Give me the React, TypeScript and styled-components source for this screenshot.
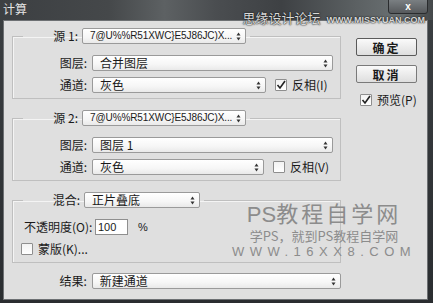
import React from "react";
import styled, { createGlobalStyle } from "styled-components";

const GlobalStyle = createGlobalStyle`
  html, body {
    margin: 0;
    padding: 0;
    background: #1f2124;
  }
  body {
    font-family: "Noto Sans CJK SC", "Liberation Sans", sans-serif;
    font-size: 12px;
    color: #1a1a1a;
  }
`;

const Window = styled.div`
  position: relative;
  width: 433px;
  height: 303px;
  overflow: hidden;
  background: linear-gradient(180deg, #3b3f42 0%, #2a2d30 100%);
  display: flex;
  flex-direction: column;
`;

const TitleBar = styled.div`
  height: 20px;
  flex: none;
  display: flex;
  align-items: flex-start;
  padding-left: 3px;
  background: linear-gradient(
    90deg,
    #3c3f42 0%,
    #45484a 25%,
    #5d6163 38%,
    #4a4d50 50%,
    #3e4144 65%,
    #5b6062 82%,
    #6a7072 92%,
    #44484a 100%
  );
`;

const Title = styled.span`
  color: #e4e4e4;
  font-size: 12px;
  line-height: 16px;
  margin-top: 1px;
`;

const CloseButton = styled.div`
  position: absolute;
  left: 388px;
  top: -1px;
  width: 38px;
  height: 13px;
  border: 1px solid #2a2c2e;
  border-radius: 0 0 3px 3px;
  background: linear-gradient(180deg, #7a7f82, #56595c);
  display: flex;
  align-items: center;
  justify-content: center;
  color: #ffffff;
  font-family: "Liberation Sans", sans-serif;
  font-weight: bold;
  font-size: 10px;
`;

const ForumMark = styled.div`
  position: absolute;
  right: 8px;
  top: 8px;
  display: flex;
  align-items: baseline;
  gap: 6px;
  color: #d8d8d8;
  text-shadow: 0 0 2px #222, 0 0 1px #000;
  white-space: nowrap;
  span:first-child {
    font-size: 13px;
  }
  span:last-child {
    font-family: "Liberation Sans", sans-serif;
    font-size: 9px;
    font-weight: bold;
  }
`;

const Dialog = styled.div`
  margin: 0 5px 0 3px;
  height: 280px;
  box-sizing: border-box;
  border: 1px solid #6d7073;
  background: #dfdfdf;
  display: flex;
  padding: 7px 0 0 8px;
`;

const LeftColumn = styled.div`
  width: 329px;
  display: flex;
  flex-direction: column;
`;

const RightColumn = styled.div`
  margin-left: 15px;
  padding-top: 10px;
  display: flex;
  flex-direction: column;
  align-items: flex-start;
`;

const Group = styled.fieldset<{ $gap?: number }>`
  margin: 0 0 ${(p) => p.$gap ?? 11}px 0;
  padding: 0 0 5px 0;
  min-width: 0;
  border: 1px solid #bfbfbf;
  box-shadow: inset 1px 1px 0 #f4f4f4;
  display: flex;
  flex-direction: column;
  gap: 6px;
`;

const Legend = styled.legend`
  margin-left: 10px;
  padding: 0 4px 0 0;
  display: flex;
  align-items: center;
  gap: 4px;
  margin-bottom: 11px;
`;

const Row = styled.div<{ $indent?: number }>`
  display: flex;
  align-items: center;
  gap: 5px;
  padding-left: ${(p) => p.$indent ?? 0}px;
  height: 16px;
`;

const Label = styled.span<{ $w: number }>`
  width: ${(p) => p.$w}px;
  text-align: right;
  white-space: nowrap;
  line-height: 16px;
`;

const SelectBox = styled.div<{ $w: number }>`
  width: ${(p) => p.$w}px;
  height: 16px;
  box-sizing: border-box;
  border: 1px solid #9a9a9a;
  border-radius: 2px;
  background: linear-gradient(180deg, #ffffff 0%, #f6f6f6 60%, #e9e9e9 100%);
  display: flex;
  align-items: center;
  justify-content: space-between;
  padding: 0 4px 0 7px;
  white-space: nowrap;
`;

const SelectText = styled.span<{ $latin?: boolean }>`
  font-family: ${(p) =>
    p.$latin
      ? `"Liberation Sans", sans-serif`
      : `"Noto Sans CJK SC", sans-serif`};
  font-size: ${(p) => (p.$latin ? 10 : 12)}px;
  letter-spacing: ${(p) => (p.$latin ? "-0.1px" : "0")};
  line-height: 14px;
`;

const Arrows = styled.svg`
  flex: none;
  margin-left: 3px;
`;

const CheckWrap = styled.label<{ $ml?: number }>`
  display: flex;
  align-items: center;
  gap: 5px;
  margin-left: ${(p) => p.$ml ?? 0}px;
  white-space: nowrap;
  line-height: 16px;
`;

const Box = styled.span`
  width: 12px;
  height: 12px;
  box-sizing: border-box;
  border: 1px solid #8e8e8e;
  border-radius: 1px;
  background: linear-gradient(180deg, #f2f2f2, #ffffff);
  display: flex;
  align-items: center;
  justify-content: center;
`;

const Button = styled.div<{ $default?: boolean }>`
  width: 61px;
  height: 18px;
  box-sizing: border-box;
  border: 1px solid ${(p) => (p.$default ? "#5a5a5a" : "#7a7a7a")};
  border-radius: 2px;
  background: linear-gradient(180deg, #fafafa 0%, #ececec 50%, #dedede 100%);
  display: flex;
  align-items: center;
  justify-content: center;
  font-weight: bold;
  letter-spacing: 2px;
  margin-bottom: 9px;
`;

const NumberField = styled.div`
  width: 33px;
  height: 16px;
  box-sizing: border-box;
  border: 1px solid #8f8f8f;
  background: #ffffff;
  font-family: "Liberation Sans", sans-serif;
  font-size: 11px;
  line-height: 14px;
  padding-left: 2px;
`;

const Percent = styled.span`
  margin-left: 5px;
  font-family: "Liberation Sans", sans-serif;
  font-size: 11px;
`;

const SiteMark = styled.div`
  position: absolute;
  left: 244px;
  top: 199px;
  width: 160px;
  display: flex;
  flex-direction: column;
  align-items: center;
  color: #8c8c8c;
  pointer-events: none;
  white-space: nowrap;
`;

const SiteName = styled.div`
  font-size: 22px;
  line-height: 27px;
  letter-spacing: 3px;
  span {
    font-family: "Liberation Sans", sans-serif;
    letter-spacing: 0;
  }
`;

const SiteSlogan = styled.div`
  font-family: "Noto Sans CJK SC", serif;
  font-size: 13px;
  line-height: 16px;
`;

const SiteUrl = styled.div`
  font-family: "Liberation Sans", sans-serif;
  font-size: 13px;
  line-height: 15px;
  letter-spacing: 5.5px;
`;

function UpDown() {
  return (
    <Arrows width="5" height="9" viewBox="0 0 5 9">
      <path d="M2.5 0.5 L4.5 3.5 L0.5 3.5 Z" fill="#333" />
      <path d="M0.5 5.5 L4.5 5.5 L2.5 8.5 Z" fill="#333" />
    </Arrows>
  );
}

function Select({ w, value, latin }: { w: number; value: string; latin?: boolean }) {
  return (
    <SelectBox $w={w}>
      <SelectText $latin={latin}>{value}</SelectText>
      <UpDown />
    </SelectBox>
  );
}

function Check({ checked, label, ml }: { checked?: boolean; label: string; ml?: number }) {
  return (
    <CheckWrap $ml={ml}>
      <Box>
        {checked && (
          <svg width="10" height="10" viewBox="0 0 10 10">
            <path d="M1.5 5 L4 8 L9 1" fill="none" stroke="#222" strokeWidth="1.6" />
          </svg>
        )}
      </Box>
      {label}
    </CheckWrap>
  );
}

const sourceName = "7@U%%R51XWC}E5J86JC)X...";

function App() {
  return (
    <Window>
      <GlobalStyle />
      <TitleBar>
        <Title>计算</Title>
      </TitleBar>
      <CloseButton>x</CloseButton>
      <ForumMark>
        <span>思缘设计论坛</span>
        <span>WWW.MISSYUAN.COM</span>
      </ForumMark>
      <Dialog>
        <LeftColumn>
          <Group>
            <Legend>
              <Label $w={55}>源 1:</Label>
              <Select w={164} value={sourceName} latin />
            </Legend>
            <Row>
              <Label $w={74}>图层:</Label>
              <Select w={241} value="合并图层" />
            </Row>
            <Row>
              <Label $w={74}>通道:</Label>
              <Select w={174} value="灰色" />
              <Check checked label="反相(I)" ml={4} />
            </Row>
          </Group>
          <Group>
            <Legend>
              <Label $w={55}>源 2:</Label>
              <Select w={164} value={sourceName} latin />
            </Legend>
            <Row>
              <Label $w={74}>图层:</Label>
              <Select w={241} value="图层 1" />
            </Row>
            <Row>
              <Label $w={74}>通道:</Label>
              <Select w={172} value="灰色" />
              <Check label="反相(V)" ml={4} />
            </Row>
          </Group>
          <Group $gap={10}>
            <Legend>
              <Label $w={57}>混合:</Label>
              <Select w={116} value="正片叠底" />
            </Legend>
            <Row $indent={11}>
              <Label $w={66}>不透明度(O):</Label>
              <NumberField>100</NumberField>
              <Percent>%</Percent>
            </Row>
            <Row $indent={8}>
              <Check label="蒙版(K)..." />
            </Row>
          </Group>
          <Row>
            <Label $w={75}>结果:</Label>
            <Select w={250} value="新建通道" />
          </Row>
        </LeftColumn>
        <RightColumn>
          <Button $default>确定</Button>
          <Button>取消</Button>
          <Check checked label="预览(P)" ml={4} />
        </RightColumn>
      </Dialog>
      <SiteMark>
        <SiteName>
          <span>PS</span>教程自学网
        </SiteName>
        <SiteSlogan>学PS，就到PS教程自学网</SiteSlogan>
        <SiteUrl>WWW.16XX8.COM</SiteUrl>
      </SiteMark>
    </Window>
  );
}

export default App;
